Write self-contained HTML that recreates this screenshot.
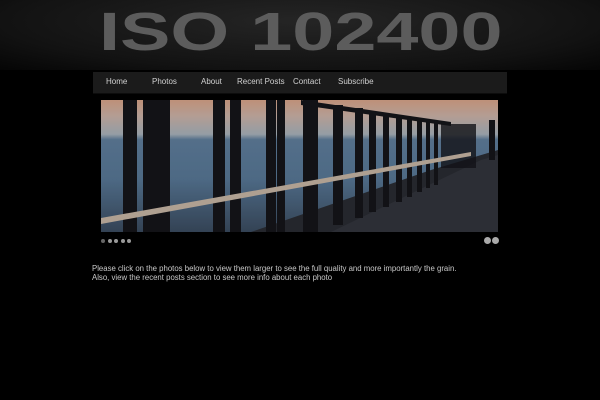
<!DOCTYPE html>
<html><head><style>
body{margin:0;width:600px;height:400px;background:#000;overflow:hidden;font-family:"Liberation Sans",sans-serif;position:relative}
#hd{position:absolute;left:0;top:0;width:600px;height:70px;background:radial-gradient(ellipse at 50% 30%,#252525,#121212 70%,#050505)}
#logo{position:absolute;left:99px;top:5px;font:bold 54px "Liberation Sans",sans-serif;color:#5c5c5c;letter-spacing:0px;transform:scaleX(1.40);transform-origin:0 0;white-space:nowrap;line-height:54px}
#nav{position:absolute;left:93px;top:72px;width:414px;height:21px;background:#1b1b1b;border-bottom:1px solid #0c0c0c}
#nav span{position:absolute;top:5px;font-size:8px;color:#d0d0d0}
.txt{position:absolute;left:92px;font-size:7.8px;color:#c8c8c8;white-space:nowrap}
.dot{position:absolute;top:239px;width:4px;height:4px;border-radius:50%;background:#999}
.bd{position:absolute;top:237px;width:7px;height:7px;border-radius:50%;background:#aaa}
</style></head><body>
<div id="hd"></div>
<div id="logo">ISO 102400</div>
<div id="nav">
<span style="left:13px">Home</span><span style="left:59px">Photos</span><span style="left:108px">About</span><span style="left:144px">Recent Posts</span><span style="left:200px">Contact</span><span style="left:245px">Subscribe</span>
</div>
<svg style="position:absolute;left:101px;top:100px" width="397" height="132" viewBox="0 0 397 132">
<defs>
<linearGradient id="sky" x1="0" y1="0" x2="0" y2="1">
<stop offset="0" stop-color="#d9a58a"/><stop offset=".12" stop-color="#cdb3a8"/><stop offset=".26" stop-color="#a9b3bc"/><stop offset=".3" stop-color="#607f9d"/><stop offset=".6" stop-color="#587897"/><stop offset="1" stop-color="#3b4c60"/>
</linearGradient>
</defs>
<rect width="397" height="132" fill="url(#sky)"/>
<polygon points="150,132 330,70 397,50 397,132" fill="#2a2c33"/>
<polygon points="230,132 380,60 397,55 397,132" fill="#33353d"/>
<g fill="#15151a">
<rect x="22" y="0" width="14" height="132"/><rect x="42" y="0" width="14" height="132"/><rect x="55" y="0" width="14" height="132"/>
<rect x="112" y="0" width="12" height="132"/><rect x="129" y="0" width="11" height="132"/>
<rect x="165" y="0" width="10" height="132"/><rect x="176" y="0" width="8" height="132"/>
<rect x="202" y="0" width="10" height="132"/><rect x="210" y="0" width="7" height="132"/>
<rect x="232" y="5" width="10" height="120"/><rect x="254" y="8" width="8" height="110"/>
<rect x="268" y="12" width="7" height="100"/><rect x="282" y="15" width="6" height="92"/>
<rect x="295" y="17" width="6" height="85"/><rect x="306" y="19" width="5" height="78"/>
<rect x="316" y="20" width="5" height="72"/><rect x="325" y="22" width="4" height="66"/>
<rect x="333" y="23" width="4" height="62"/><rect x="340" y="24" width="35" height="44" opacity=".8"/>
<rect x="388" y="20" width="6" height="40"/>
<polygon points="200,0 350,22 350,26 200,5"/>
</g>
<polygon points="0,118 370,52 370,56 0,124" fill="#c8b7a6"/>
<rect x="0" y="0" width="397" height="132" fill="#000" opacity=".12"/>
</svg>
<div class="dot" style="left:101px;background:#666"></div><div class="dot" style="left:108px"></div><div class="dot" style="left:114px"></div><div class="dot" style="left:121px"></div><div class="dot" style="left:127px"></div>
<div class="bd" style="left:484px"></div><div class="bd" style="left:492px"></div>
<div class="txt" style="top:264px">Please click on the photos below to view them larger to see the full quality and more importantly the grain.</div>
<div class="txt" style="top:273px">Also, view the recent posts section to see more info about each photo</div>
</body></html>
